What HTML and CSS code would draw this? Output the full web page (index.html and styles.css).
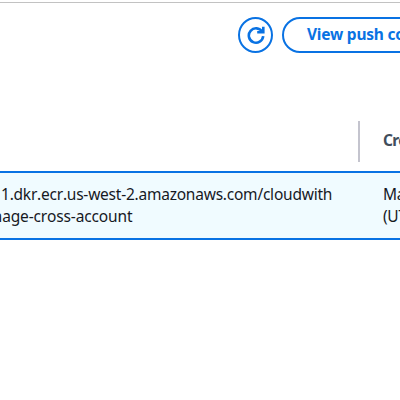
FILE: index.html
```html
<!DOCTYPE html>
<html lang="en">
<head>
<meta charset="utf-8">
<title>Images</title>
<link rel="stylesheet" href="styles.css">
</head>
<body>
<main class="panel">
  <header class="toolbar">
    <button class="refresh" aria-label="Refresh">
      <svg class="refresh-icon" viewBox="0 0 20 20" width="20" height="20">
        <path d="M17.2 11.2A7.2 7.2 0 1 1 16.2 6.8M17.3 1.8V7.3H11.2"/>
      </svg>
    </button>
    <button class="push">View push commands</button>
  </header>
  <div class="row head">
    <div class="cell uri-head"></div>
    <div class="cell date">Created at</div>
  </div>
  <div class="row selected">
    <div class="cell uri"><span class="host">1.dkr.ecr.us-west-2.amazonaws.com/cloudwith</span><span class="repo">image-cross-account</span></div>
    <div class="cell date"><span>March</span><span>(UTC)</span></div>
  </div>
</main>
</body>
</html>
```
FILE: styles.css
```css
* { box-sizing: border-box; }
body {
  margin: 0;
  width: 400px;
  height: 400px;
  overflow: hidden;
  background: #fff;
  font-family: "Noto Sans", "Open Sans", sans-serif;
  font-size: 15.5px;
  line-height: 22px;
  color: #16191f;
}
.panel {
  width: 400px;
  height: 400px;
  overflow: hidden;
  padding-top: 2px;
}
.toolbar {
  display: flex;
  gap: 9px;
  height: 119px;
  padding: 14px 0 0 238px;
  border-top: 1px solid #c2c2c2;
}
.refresh, .push {
  flex: none;
  height: 36px;
  border: 2px solid #0972e3;
  background: #fff;
  color: #0972e3;
}
.refresh {
  display: flex;
  align-items: center;
  justify-content: center;
  width: 35px;
  padding: 0;
  border-radius: 50%;
}
.refresh-icon {
  fill: none;
  stroke: #0972e3;
  stroke-width: 2.6;
}
.push {
  width: 210px;
  padding: 0 0 2px 23px;
  border-radius: 18px;
  font: 700 15.5px/30px "Noto Sans", sans-serif;
  letter-spacing: -0.22px;
  text-align: left;
  white-space: nowrap;
}
.row {
  display: flex;
  white-space: nowrap;
}
.head {
  height: 50px;
  color: #414d5c;
  font-weight: 700;
}
.uri-head {
  width: 360px;
  height: 41px;
  flex: none;
  border-right: 2px solid #c4c4ce;
}
.head .date {
  padding: 8px 0 0 23px;
  font-size: 15.5px;
  letter-spacing: -0.6px;
}
.selected {
  height: 69px;
  padding-top: 10px;
  border-top: 2px solid #0972e3;
  border-bottom: 2px solid #0972e3;
  background: #f0fbff;
}
.uri {
  display: flex;
  flex: none;
  flex-direction: column;
  width: 383px;
  font-kerning: none;
}
.host { margin-left: 1px; letter-spacing: -0.23px; }
.repo { margin-left: -16px; letter-spacing: -0.15px; }
.selected .date {
  display: flex;
  flex-direction: column;
  letter-spacing: -0.3px;
}
```
